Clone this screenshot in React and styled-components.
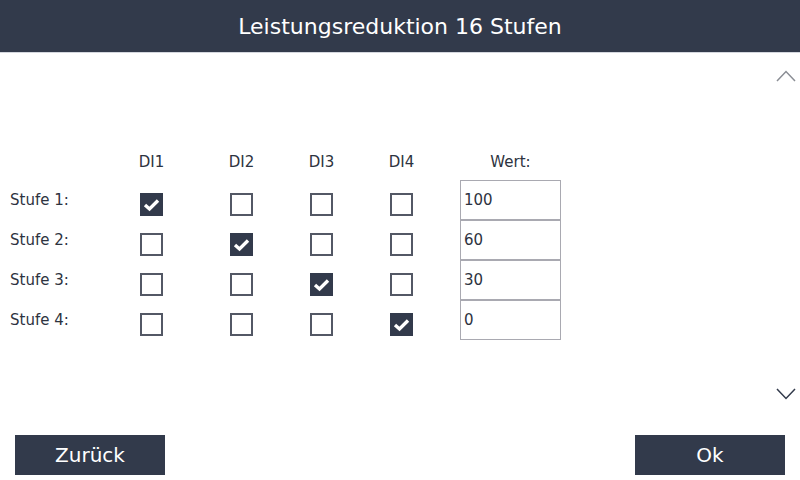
import styled, { createGlobalStyle } from "styled-components";

const GlobalStyle = createGlobalStyle`
  html, body {
    margin: 0;
    padding: 0;
    background: #ffffff;
    font-family: "DejaVu Sans", "Liberation Sans", sans-serif;
  }
`;

const Screen = styled.div`
  width: 800px;
  height: 480px;
  display: flex;
  flex-direction: column;
  background: #ffffff;
  overflow: hidden;
`;

const Header = styled.div`
  height: 52px;
  flex: none;
  background: #323a4b;
  border-bottom: 1px solid #d4d7de;
  color: #ffffff;
  font-size: 22px;
  display: flex;
  align-items: center;
  justify-content: center;
`;

const Main = styled.div`
  flex: 1;
  display: flex;
  justify-content: space-between;
`;

const Table = styled.div`
  display: grid;
  grid-template-columns: 130px 90px 80px 80px 70px 101px;
  grid-template-rows: 30px repeat(4, 40px);
  padding: 97px 0 0 10px;
  color: #2d3340;
  font-size: 15px;
`;

const ColHead = styled.div`
  width: ${p => (p.$wide ? "101px" : "23px")};
  display: flex;
  justify-content: center;
  white-space: nowrap;
  line-height: 20px;
  padding-top: 2px;
`;

const RowLabel = styled.div`
  display: flex;
  align-items: center;
  height: 40px;
`;

const CheckCell = styled.div`
  padding-top: 13px;
`;

const Box = styled.div`
  width: 23px;
  height: 23px;
  box-sizing: border-box;
  border: 2px solid ${p => (p.$on ? "#323a4b" : "#535865")};
  background: ${p => (p.$on ? "#323a4b" : "#ffffff")};
  display: flex;
  align-items: center;
  justify-content: center;
`;

const ValueBox = styled.div`
  width: 101px;
  height: 40px;
  box-sizing: border-box;
  border: 1px solid #a9a9b1;
  padding-left: 3px;
  display: flex;
  align-items: center;
  color: #2d3340;
`;

const ScrollColumn = styled.div`
  display: flex;
  flex-direction: column;
  justify-content: space-between;
  padding: 17px 4px 35px 0;
`;

const Footer = styled.div`
  height: 40px;
  flex: none;
  margin: 0 15px 5px;
  display: flex;
  justify-content: space-between;
`;

const Button = styled.div`
  width: 150px;
  height: 40px;
  background: #323a4b;
  color: #ffffff;
  font-size: 20px;
  display: flex;
  align-items: center;
  justify-content: center;
`;

const Check = () => (
  <svg width="17" height="14" viewBox="0 0 17 14">
    <path d="M2 7 L6.5 11 L15 2.5" fill="none" stroke="#ffffff" strokeWidth="3.4" />
  </svg>
);

const Chevron = ({ up, color }) => (
  <svg width="20" height="12" viewBox="0 0 20 12">
    <path
      d={up ? "M1 11 L10 1.5 L19 11" : "M1 1 L10 10.5 L19 1"}
      fill="none"
      stroke={color}
      strokeWidth="1.5"
    />
  </svg>
);

const stages = [
  { label: "Stufe 1:", on: 0, value: "100" },
  { label: "Stufe 2:", on: 1, value: "60" },
  { label: "Stufe 3:", on: 2, value: "30" },
  { label: "Stufe 4:", on: 3, value: "0" },
];

export default function App() {
  return (
    <Screen>
      <GlobalStyle />
      <Header>Leistungsreduktion 16 Stufen</Header>
      <Main>
        <Table>
          <div />
          {["DI1", "DI2", "DI3", "DI4"].map(h => (
            <ColHead key={h}>{h}</ColHead>
          ))}
          <ColHead $wide>Wert:</ColHead>
          {stages.map(stage => (
            <>
              <RowLabel key={stage.label}>{stage.label}</RowLabel>
              {[0, 1, 2, 3].map(i => (
                <CheckCell key={stage.label + i}>
                  <Box $on={stage.on === i}>{stage.on === i && <Check />}</Box>
                </CheckCell>
              ))}
              <ValueBox key={stage.label + "v"}>{stage.value}</ValueBox>
            </>
          ))}
        </Table>
        <ScrollColumn>
          <Chevron up color="#8a8d94" />
          <Chevron color="#323a4b" />
        </ScrollColumn>
      </Main>
      <Footer>
        <Button>Zurück</Button>
        <Button>Ok</Button>
      </Footer>
    </Screen>
  );
}
